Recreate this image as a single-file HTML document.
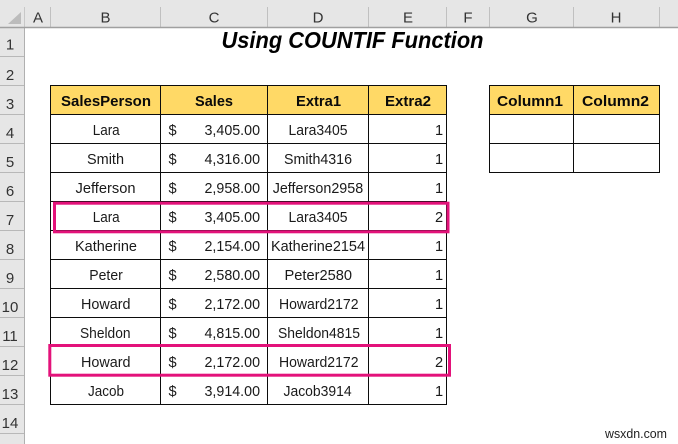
<!DOCTYPE html>
<html><head><meta charset="utf-8"><style>
html,body{margin:0;padding:0;background:#fff;width:678px;height:444px;overflow:hidden}
svg{display:block}
text{font-family:"Liberation Sans",sans-serif;font-size:14.6px;fill:#1a1a1a}
.h{fill:#333;font-size:15px;text-anchor:middle}
.b{font-weight:bold;fill:#0a0a0a}
</style></head><body>
<svg width="678" height="444" viewBox="0 0 678 444" xmlns="http://www.w3.org/2000/svg">
<rect width="678" height="444" fill="#fff"/>
<rect width="678" height="27" fill="#e6e6e6"/>
<rect width="24" height="444" fill="#e6e6e6"/>
<path d="M21 12V24H8Z" fill="#bcbcbc"/>
<path d="M50.5 7V27M160.5 7V27M267.5 7V27M368.5 7V27M446.5 7V27M489.5 7V27M573.5 7V27M659.5 7V27" stroke="#c0c0c0" stroke-width="1"/>
<path d="M24.5 7V27" stroke="#c8c8c8"/>
<path d="M0 56.5H24M0 85.5H24M0 114.5H24M0 143.5H24M0 172.5H24M0 201.5H24M0 230.5H24M0 259.5H24M0 288.5H24M0 317.5H24M0 346.5H24M0 375.5H24M0 404.5H24M0 433.5H24" stroke="#b8b8b8"/>
<path d="M24.5 27V444" stroke="#b0b0b0"/>
<path d="M0 27.5H678" stroke="#a0a0a0" stroke-width="1.5"/>
<g class="hd">
<text class="h" x="38" y="22.5">A</text><text class="h" x="105.5" y="22.5">B</text><text class="h" x="214" y="22.5">C</text><text class="h" x="318" y="22.5">D</text><text class="h" x="408" y="22.5">E</text><text class="h" x="468" y="22.5">F</text><text class="h" x="532" y="22.5">G</text><text class="h" x="616" y="22.5">H</text>
<text class="h" x="10" y="49.5">1</text><text class="h" x="10" y="80">2</text><text class="h" x="10" y="109">3</text><text class="h" x="10" y="138">4</text><text class="h" x="10" y="167">5</text><text class="h" x="10" y="196">6</text><text class="h" x="10" y="225">7</text><text class="h" x="10" y="254">8</text><text class="h" x="10" y="283">9</text><text class="h" x="10" y="312">10</text><text class="h" x="10" y="341">11</text><text class="h" x="10" y="370">12</text><text class="h" x="10" y="399">13</text><text class="h" x="10" y="428">14</text>
</g>
<text x="221.5" y="48" textLength="262" lengthAdjust="spacingAndGlyphs" style="font-size:23px;font-weight:bold;font-style:italic;fill:#000">Using COUNTIF Function</text>
<rect x="50.5" y="85.5" width="396" height="29" fill="#ffd966"/>
<rect x="489.5" y="85.5" width="170" height="29" fill="#ffd966"/>
<path d="M50.5 85.5H446.5M50.5 114.5H446.5M50.5 143.5H446.5M50.5 172.5H446.5M50.5 201.5H446.5M50.5 230.5H446.5M50.5 259.5H446.5M50.5 288.5H446.5M50.5 317.5H446.5M50.5 346.5H446.5M50.5 375.5H446.5M50.5 404.5H446.5M50.5 85V405M160.5 85V405M267.5 85V405M368.5 85V405M446.5 85V405" stroke="#0c0c0c" fill="none"/>
<path d="M489.5 85.5H659.5M489.5 114.5H659.5M489.5 143.5H659.5M489.5 172.5H659.5M489.5 85V173M573.5 85V173M659.5 85V173" stroke="#0c0c0c" fill="none"/>
<g class="b">
<text class="b" x="61" y="106" textLength="90" lengthAdjust="spacingAndGlyphs">SalesPerson</text>
<text class="b" x="195" y="106" textLength="38" lengthAdjust="spacingAndGlyphs">Sales</text>
<text class="b" x="296" y="106" textLength="45" lengthAdjust="spacingAndGlyphs">Extra1</text>
<text class="b" x="385" y="106" textLength="46" lengthAdjust="spacingAndGlyphs">Extra2</text>
<text class="b" x="497" y="106" textLength="66" lengthAdjust="spacingAndGlyphs">Column1</text>
<text class="b" x="582" y="106" textLength="67" lengthAdjust="spacingAndGlyphs">Column2</text>
</g>
<text x="92.7" y="135" textLength="27" lengthAdjust="spacingAndGlyphs">Lara</text>
<text x="87" y="164" textLength="37" lengthAdjust="spacingAndGlyphs">Smith</text>
<text x="75.5" y="193" textLength="60" lengthAdjust="spacingAndGlyphs">Jefferson</text>
<text x="92.7" y="222" textLength="27" lengthAdjust="spacingAndGlyphs">Lara</text>
<text x="75" y="251" textLength="62" lengthAdjust="spacingAndGlyphs">Katherine</text>
<text x="89.3" y="280" textLength="33.5" lengthAdjust="spacingAndGlyphs">Peter</text>
<text x="81" y="309" textLength="49.5" lengthAdjust="spacingAndGlyphs">Howard</text>
<text x="80" y="338" textLength="50.5" lengthAdjust="spacingAndGlyphs">Sheldon</text>
<text x="81" y="367" textLength="49.5" lengthAdjust="spacingAndGlyphs">Howard</text>
<text x="88" y="396" textLength="36" lengthAdjust="spacingAndGlyphs">Jacob</text>
<text x="168.5" y="135">$</text><text x="168.5" y="164">$</text><text x="168.5" y="193">$</text><text x="168.5" y="222">$</text><text x="168.5" y="251">$</text><text x="168.5" y="280">$</text><text x="168.5" y="309">$</text><text x="168.5" y="338">$</text><text x="168.5" y="367">$</text><text x="168.5" y="396">$</text>
<text x="204.5" y="135" textLength="55.5" lengthAdjust="spacingAndGlyphs">3,405.00</text>
<text x="204.5" y="164" textLength="55.5" lengthAdjust="spacingAndGlyphs">4,316.00</text>
<text x="204.5" y="193" textLength="55.5" lengthAdjust="spacingAndGlyphs">2,958.00</text>
<text x="204.5" y="222" textLength="55.5" lengthAdjust="spacingAndGlyphs">3,405.00</text>
<text x="204.5" y="251" textLength="55.5" lengthAdjust="spacingAndGlyphs">2,154.00</text>
<text x="204.5" y="280" textLength="55.5" lengthAdjust="spacingAndGlyphs">2,580.00</text>
<text x="204.5" y="309" textLength="55.5" lengthAdjust="spacingAndGlyphs">2,172.00</text>
<text x="204.5" y="338" textLength="55.5" lengthAdjust="spacingAndGlyphs">4,815.00</text>
<text x="204.5" y="367" textLength="55.5" lengthAdjust="spacingAndGlyphs">2,172.00</text>
<text x="204.5" y="396" textLength="55.5" lengthAdjust="spacingAndGlyphs">3,914.00</text>
<text x="288.5" y="135" textLength="59" lengthAdjust="spacingAndGlyphs">Lara3405</text>
<text x="284" y="164" textLength="68" lengthAdjust="spacingAndGlyphs">Smith4316</text>
<text x="272.7" y="193" textLength="90.5" lengthAdjust="spacingAndGlyphs">Jefferson2958</text>
<text x="288.5" y="222" textLength="59" lengthAdjust="spacingAndGlyphs">Lara3405</text>
<text x="271" y="251" textLength="94" lengthAdjust="spacingAndGlyphs">Katherine2154</text>
<text x="284.5" y="280" textLength="67.5" lengthAdjust="spacingAndGlyphs">Peter2580</text>
<text x="279" y="309" textLength="79.5" lengthAdjust="spacingAndGlyphs">Howard2172</text>
<text x="278" y="338" textLength="82" lengthAdjust="spacingAndGlyphs">Sheldon4815</text>
<text x="279" y="367" textLength="79.5" lengthAdjust="spacingAndGlyphs">Howard2172</text>
<text x="283.5" y="396" textLength="68.2" lengthAdjust="spacingAndGlyphs">Jacob3914</text>
<text x="435" y="135">1</text><text x="435" y="164">1</text><text x="435" y="193">1</text><text x="435" y="222">2</text><text x="435" y="251">1</text><text x="435" y="280">1</text><text x="435" y="309">1</text><text x="435" y="338">1</text><text x="435" y="367">2</text><text x="435" y="396">1</text>
<rect x="54.5" y="203.2" width="393.5" height="28.6" fill="none" stroke="#e3127a" stroke-width="3"/>
<rect x="49.8" y="345.5" width="399.7" height="29.7" fill="none" stroke="#e3127a" stroke-width="3"/>
<text x="605" y="438" textLength="62" lengthAdjust="spacingAndGlyphs" style="font-size:13px;fill:#222">wsxdn.com</text>
</svg>
</body></html>
